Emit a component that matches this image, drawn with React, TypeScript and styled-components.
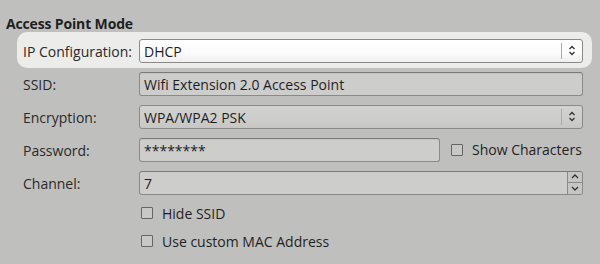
import React from "react";
import styled, { createGlobalStyle, css } from "styled-components";

const Global = createGlobalStyle`
  html, body { margin: 0; padding: 0; background: #bfbfbe; }
  body {
    width: 600px; height: 264px; overflow: hidden;
    font-family: "Open Sans", "Noto Sans", "DejaVu Sans", sans-serif;
    font-size: 14px; color: #2a2a2a;
  }
`;

const Page = styled.div`
  padding: 15px 0 0 6px;
  box-sizing: border-box;
  width: 600px;
  height: 264px;
`;

const Title = styled.div`
  font-weight: 700;
  font-size: 14px;
  line-height: 17px;
  color: #1f1f1f;
  height: 17px;
  letter-spacing: -0.15px;
`;

const Form = styled.div`
  margin: 2px 0 0 11px;
  width: 575px;
  display: flex;
  flex-direction: column;
`;

const Row = styled.div<{ $highlight?: boolean }>`
  position: relative;
  display: grid;
  grid-template-columns: 116px 1fr;
  align-items: center;
  height: 33px;
  padding: 0 9px 0 6px;
  ${(p) =>
    p.$highlight &&
    css`
      &::before {
        content: "";
        position: absolute;
        inset: -2px 0 -1px 0;
        border-radius: 10px;
        background: #ececeb;
        z-index: 0;
      }
    `}
  & > * { position: relative; z-index: 1; }
`;

const Label = styled.span`
  color: #2a2a2a;
  white-space: nowrap;
  padding-top: 1px;
`;

const fieldBase = css`
  box-sizing: border-box;
  height: 24px;
  border: 1px solid #8a8a89;
  border-radius: 3px;
  display: flex;
  align-items: center;
  padding: 1px 0 0 4px;
  color: #1e1e1e;
  font-size: 14px;
  white-space: nowrap;
  overflow: hidden;
`;

const TextField = styled.div<{ $width?: number }>`
  ${fieldBase};
  background: #cdcdcc;
  border-top-color: #7a7a79;
  box-shadow: inset 0 1px 0 #c4c4c3;
  ${(p) => p.$width && css`width: ${p.$width}px;`}
`;

const Combo = styled.div<{ $active?: boolean }>`
  ${fieldBase};
  justify-content: space-between;
  background: ${(p) =>
    p.$active
      ? "linear-gradient(#ffffff, #fbfbfb 60%, #efefef)"
      : "linear-gradient(#d2d2d1, #cdcdcc 60%, #c6c6c5)"};
`;

const ComboArrow = styled.div`
  width: 20px;
  height: 16px;
  margin-top: -1px;
  border-left: 1px solid #aaaaa9;
  display: flex;
  align-items: center;
  justify-content: center;
`;

const Spin = styled.div`
  box-sizing: border-box;
  height: 24px;
  display: flex;
  border: 1px solid #8a8a89;
  border-top-color: #7a7a79;
  border-radius: 3px;
  overflow: hidden;
  background: #cdcdcc;
`;

const SpinText = styled.div`
  flex: 1;
  display: flex;
  align-items: center;
  padding: 1px 0 0 4px;
  color: #1e1e1e;
`;

const SpinButtons = styled.div`
  width: 14px;
  display: flex;
  flex-direction: column;
  border-left: 1px solid #8a8a89;
  background: #c6c6c5;
`;

const SpinButton = styled.div<{ $top?: boolean }>`
  flex: 1;
  display: flex;
  align-items: center;
  justify-content: center;
  ${(p) => p.$top && css`border-bottom: 1px solid #8a8a89;`}
`;

const FieldLine = styled.div`
  display: flex;
  align-items: center;
`;

const CheckLabel = styled.label<{ $offset?: number }>`
  display: flex;
  align-items: center;
  gap: 9px;
  color: #1f1f1f;
  white-space: nowrap;
  margin-left: ${(p) => p.$offset ?? 0}px;
`;

const Box = styled.span`
  box-sizing: border-box;
  width: 12px;
  height: 12px;
  border: 1px solid #666665;
  border-radius: 1px;
  background: #c8c8c7;
`;

const CheckRow = styled.div`
  height: 28px;
  display: flex;
  align-items: center;
  padding-left: 135px;
`;

const UpDown = () => (
  <svg width="8" height="11" viewBox="0 0 8 11">
    <path d="M1.5 4 L4 1.5 L6.5 4" fill="none" stroke="#333" strokeWidth="1.3" />
    <path d="M1.5 7 L4 9.5 L6.5 7" fill="none" stroke="#333" strokeWidth="1.3" />
  </svg>
);

const Chevron = ({ up }: { up?: boolean }) => (
  <svg width="8" height="5" viewBox="0 0 8 5">
    <path
      d={up ? "M1 4 L4 1 L7 4" : "M1 1 L4 4 L7 1"}
      fill="none"
      stroke="#333"
      strokeWidth="1.3"
    />
  </svg>
);

export default function App() {
  return (
    <>
      <Global />
      <Page>
        <Title>Access Point Mode</Title>
        <Form>
          <Row $highlight>
            <Label>IP Configuration:</Label>
            <Combo $active>
              <span>DHCP</span>
              <ComboArrow>
                <UpDown />
              </ComboArrow>
            </Combo>
          </Row>
          <Row>
            <Label>SSID:</Label>
            <TextField>Wifi Extension 2.0 Access Point</TextField>
          </Row>
          <Row>
            <Label>Encryption:</Label>
            <Combo>
              <span>WPA/WPA2 PSK</span>
              <ComboArrow>
                <UpDown />
              </ComboArrow>
            </Combo>
          </Row>
          <Row>
            <Label>Password:</Label>
            <FieldLine>
              <TextField $width={301}>********</TextField>
              <CheckLabel $offset={11}>
                <Box />
                Show Characters
              </CheckLabel>
            </FieldLine>
          </Row>
          <Row>
            <Label>Channel:</Label>
            <Spin>
              <SpinText>7</SpinText>
              <SpinButtons>
                <SpinButton $top>
                  <Chevron up />
                </SpinButton>
                <SpinButton>
                  <Chevron />
                </SpinButton>
              </SpinButtons>
            </Spin>
          </Row>
        </Form>
        <CheckRow>
          <CheckLabel>
            <Box />
            Hide SSID
          </CheckLabel>
        </CheckRow>
        <CheckRow>
          <CheckLabel>
            <Box />
            Use custom MAC Address
          </CheckLabel>
        </CheckRow>
      </Page>
    </>
  );
}
